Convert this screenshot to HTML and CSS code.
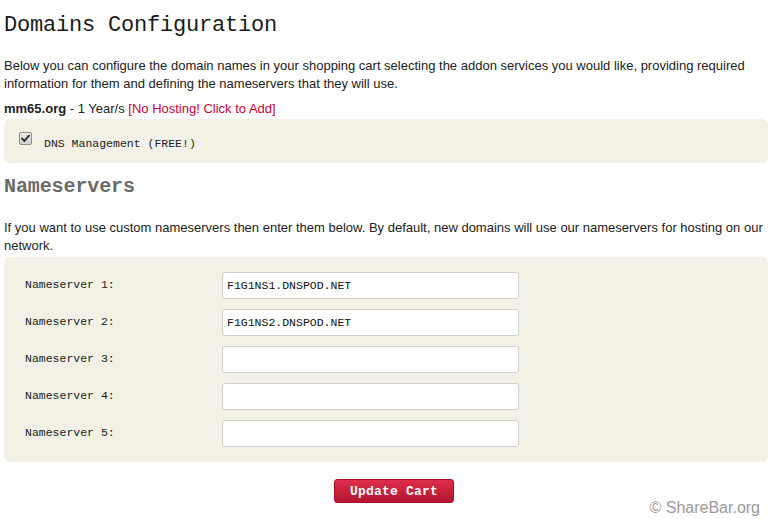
FILE: index.html
```html
<!DOCTYPE html>
<html>
<head>
<meta charset="utf-8">
<link rel="stylesheet" href="styles.css">
</head>
<body>
<div class="page">
  <h1 class="title">Domains Configuration</h1>
  <p class="intro">Below you can configure the domain names in your shopping cart selecting the addon services you would like, providing required information for them and defining the nameservers that they will use.</p>
  <p class="domain"><strong>mm65.org</strong> - 1 Year/s <a class="addlink" href="#">[No Hosting! Click to Add]</a></p>
  <div class="panel addons">
    <label class="addon">
      <span class="check" role="checkbox" aria-checked="true">
        <svg width="9" height="9" viewBox="0 0 9 9"><path d="M1 4.6 L3.4 7 L8 1.6" fill="none" stroke="#2a2a2a" stroke-width="1.9" stroke-linecap="round" stroke-linejoin="round"/></svg>
      </span>
      <span class="addon-text">DNS Management (FREE!)</span>
    </label>
  </div>
  <h2 class="subtitle">Nameservers</h2>
  <p class="intro ns-intro">If you want to use custom nameservers then enter them below. By default, new domains will use our nameservers for hosting on our network.</p>
  <div class="panel ns-panel">
    <div class="ns-row"><span class="ns-label">Nameserver 1:</span><input class="ns-input" type="text" value="F1G1NS1.DNSPOD.NET"></div>
    <div class="ns-row"><span class="ns-label">Nameserver 2:</span><input class="ns-input" type="text" value="F1G1NS2.DNSPOD.NET"></div>
    <div class="ns-row"><span class="ns-label">Nameserver 3:</span><input class="ns-input" type="text" value=""></div>
    <div class="ns-row"><span class="ns-label">Nameserver 4:</span><input class="ns-input" type="text" value=""></div>
    <div class="ns-row"><span class="ns-label">Nameserver 5:</span><input class="ns-input" type="text" value=""></div>
  </div>
  <div class="actions">
    <button class="update-btn" type="button">Update Cart</button>
  </div>
</div>
<div class="watermark">© ShareBar.org</div>
</body>
</html>
```

FILE: styles.css
```css
html, body {
  margin: 0;
  padding: 0;
  background: #ffffff;
}
body {
  font-family: "Liberation Sans", Arial, sans-serif;
  font-size: 13px;
  color: #222222;
  width: 769px;
  height: 519px;
  overflow: hidden;
  position: relative;
}
.page {
  padding: 0 1px 0 4px;
}
.title {
  font-family: "Liberation Mono", "Courier New", monospace;
  font-weight: normal;
  font-size: 22px;
  letter-spacing: -0.2px;
  line-height: 36px;
  margin: 0;
  padding-top: 8px;
  color: #1a1a1a;
  height: 50px;
  box-sizing: border-box;
}
.intro {
  margin: 0;
  padding-top: 7px;
  line-height: 18px;
}
.domain {
  margin: 7px 0 0 0;
  line-height: 18px;
}
.domain strong {
  font-weight: bold;
}
.addlink {
  color: #cc0033;
  text-decoration: none;
}
.panel {
  background: #f3f1e6;
  border-radius: 6px;
}
.addons {
  margin-top: 1px;
  height: 44px;
  box-sizing: border-box;
  padding: 13px 0 0 15px;
}
.addon {
  display: flex;
  align-items: flex-start;
}
.check {
  box-sizing: border-box;
  width: 13px;
  height: 13px;
  border: 1px solid #8e8e8e;
  border-radius: 2px;
  background: linear-gradient(#ececec, #d2d2d2);
  display: flex;
  align-items: center;
  justify-content: center;
}
.addon-text {
  font-family: "Liberation Mono", "Courier New", monospace;
  font-size: 11.5px;
  line-height: 14px;
  margin-left: 12px;
  padding-top: 5px;
  color: #222222;
}
.subtitle {
  font-family: "Liberation Mono", "Courier New", monospace;
  font-size: 20px;
  font-weight: bold;
  color: #6a6a6a;
  margin: 0;
  line-height: 28px;
  padding-top: 10px;
  letter-spacing: -0.1px;
}
.ns-intro {
  padding-top: 18px;
}
.panel.ns-panel {
  margin-top: 2px;
  padding: 15px 0 15px 21px;
  display: flex;
  flex-direction: column;
  gap: 10px;
}
.ns-row {
  display: flex;
  align-items: center;
  height: 27px;
}
.ns-label {
  font-family: "Liberation Mono", "Courier New", monospace;
  font-size: 11.5px;
  color: #222222;
  width: 197px;
  padding-bottom: 2px;
}
.ns-input {
  box-sizing: border-box;
  width: 297px;
  height: 27px;
  border: 1px solid #cfcfcf;
  border-radius: 3px;
  background: #ffffff;
  padding: 0 4px;
  font-family: "Liberation Mono", "Courier New", monospace;
  font-size: 11.5px;
  color: #111111;
  outline: none;
}
.actions {
  display: flex;
  justify-content: center;
  padding: 17px 0 0 16px;
}
.update-btn {
  width: 120px;
  height: 24px;
  border: 1px solid #a8132c;
  border-radius: 3px;
  background: linear-gradient(#dd2d4a, #b3162f);
  color: #ffffff;
  font-family: "Liberation Mono", "Courier New", monospace;
  font-weight: bold;
  font-size: 13px;
  letter-spacing: 0.2px;
  padding: 0;
  cursor: pointer;
}
.watermark {
  position: absolute;
  right: 9px;
  bottom: 2px;
  font-family: "Liberation Sans", Arial, sans-serif;
  font-size: 16px;
  color: #9a9a9a;
  line-height: 18px;
}
```
